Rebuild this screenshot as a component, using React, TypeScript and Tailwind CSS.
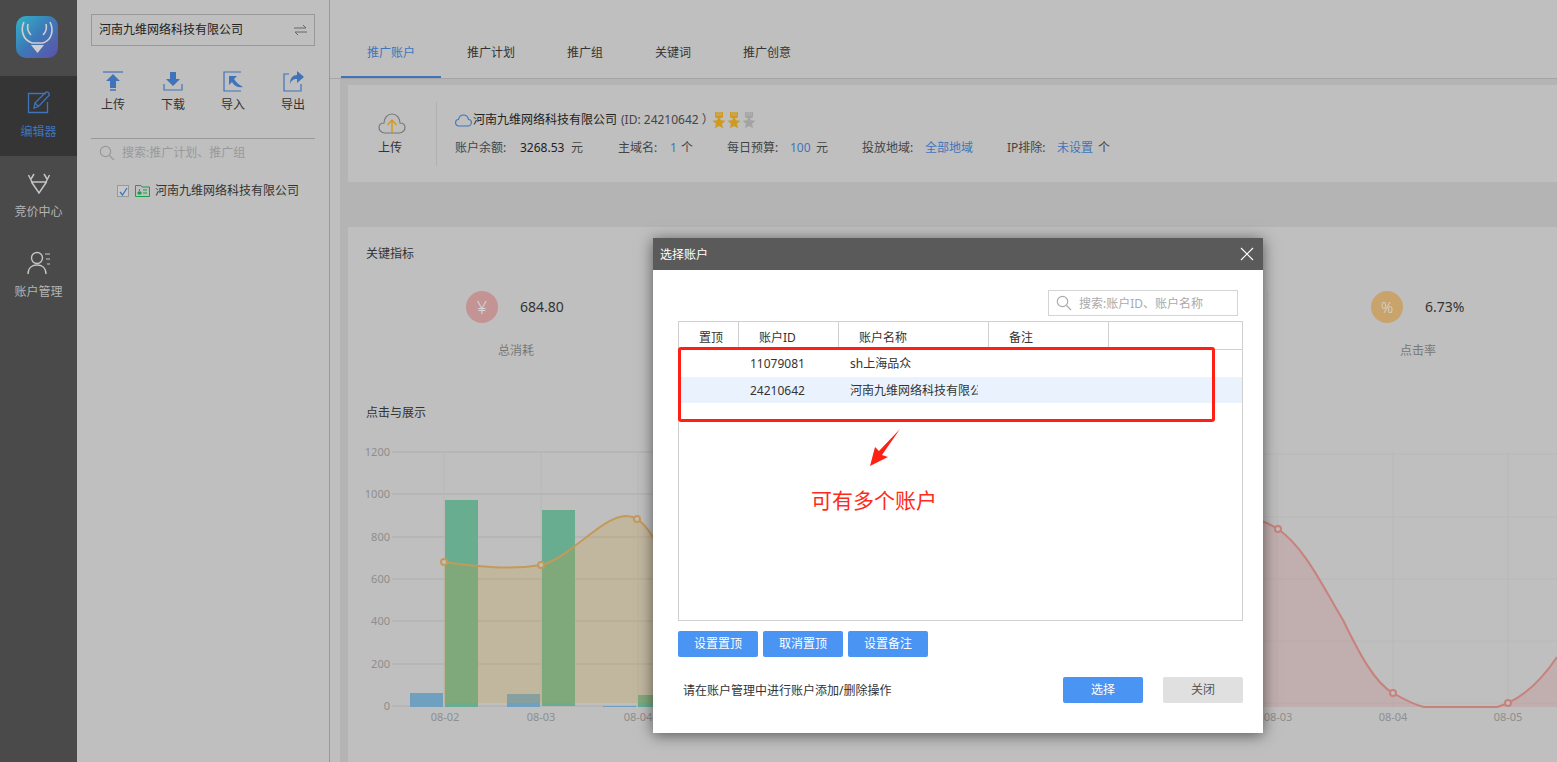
import React from 'react';

const navItems = [
  { label: '编辑器', active: true },
  { label: '竞价中心', active: false },
  { label: '账户管理', active: false },
];

const NavIcon = ({ index }: { index: number }) => {
  if (index === 0) {
    return (
      <svg width="26" height="24" viewBox="0 0 26 24" fill="none" stroke="#3f74bb" strokeWidth="1.3">
        <path d="M20 2.500H2.500v19h19V11" />
        <path d="M8 17l1-5L19.500 1.500c1-1 2-.8 3 .2s1.200 2 .2 3L12.500 15.500z" />
        <path d="M9 12l3.500 3.500" />
      </svg>
    );
  }
  if (index === 1) {
    return (
      <svg width="24" height="22" viewBox="0 0 24 22" fill="none" stroke="#c4c4c4" strokeWidth="1.5">
        <path d="M1.500 3L5 10M22.500 3L19 10" />
        <path d="M7 2L4 7M17 2l3 5" />
        <path d="M4 10h16M4.500 10L12 21l7.500-11" />
      </svg>
    );
  }
  return (
    <svg width="24" height="24" viewBox="0 0 24 24" fill="none" stroke="#c4c4c4" strokeWidth="1.4">
      <circle cx="10" cy="7" r="5.500" />
      <path d="M1 23c0-6 4-9 9-9s9 3 9 9" />
      <path d="M18 3h5M19 8h4M20 13h3" strokeWidth="1" />
    </svg>
  );
};

const ActionIcon = ({ index }: { index: number }) => {
  const shapes = [
    <g key="up">
      <path d="M0 1h20" stroke="#3f74bb" strokeWidth="1.2" />
      <path d="M10 3l7 7h-4v7H7v-7H3z" fill="#3f74bb" />
      <path d="M7 19h6" stroke="#3f74bb" strokeWidth="1.5" />
    </g>,
    <g key="down" fill="none">
      <path d="M1 13v6h18v-6" stroke="#3f74bb" strokeWidth="1.2" />
      <path d="M7 1h6v7h4l-7 7-7-7h4z" fill="#3f74bb" />
    </g>,
    <g key="in" fill="none">
      <path d="M18 1H1v19h17" stroke="#3f74bb" strokeWidth="1.2" />
      <path d="M6 5h8l-3 3c2 3 5 6 9 8-5 1-9-1-11-5l-3 3z" fill="#3f74bb" />
    </g>,
    <g key="out" fill="none">
      <path d="M6 3H1v17h17v-7" stroke="#3f74bb" strokeWidth="1.2" />
      <path d="M14 0l7 6-7 6V8c-4 0-6 2-7 5 0-6 3-9 7-9z" fill="#3f74bb" />
    </g>,
  ];
  return (
    <svg width="21" height="21" viewBox="0 0 21 21">
      {shapes[index]}
    </svg>
  );
};

const actions = ['上传', '下载', '导入', '导出'];

const Star = ({ color }: { color: string }) => (
  <svg width="14" height="17" viewBox="0 0 14 17">
    <path d="M3 0h8v5l-1 1H4L3 5z" fill={color} />
    <path d="M5 0v4M7 0v4M9 0v4" stroke="#c0c0c0" strokeWidth="0.6" />
    <path d="M7 4l1.900 4.300 4.600.4-3.500 3 1.100 4.600L7 13.900l-4.100 2.400L4 11.700.5 8.700l4.600-.4z" fill={color} />
  </svg>
);

const SearchIcon = ({ color }: { color: string }) => (
  <svg width="16" height="16" viewBox="0 0 16 16" fill="none" stroke={color} strokeWidth="1.2">
    <circle cx="6.500" cy="6.500" r="5.200" />
    <path d="M10.500 10.500l4.500 4.500" />
  </svg>
);

const Charts = () => {
  const leftGrid = [452, 494, 537, 579, 621, 664, 706];
  const leftLabels = ['1200', '1000', '800', '600', '400', '200', '0'];
  return (
    <svg className="block" width="1209" height="322" viewBox="348 440 1209 322">
      {leftGrid.map((y) => (
        <path key={y} d={`M392 ${y}H660`} stroke="#b6b6b6" strokeWidth="2" />
      ))}
      {[444, 541, 638].map((x) => (
        <path key={x} d={`M${x} 452V707`} stroke="#b8b8b8" />
      ))}
      {leftLabels.map((t, i) => (
        <text key={t} x="390" y={leftGrid[i] + 4} textAnchor="end" fontSize="11" fill="#8e8e8e">
          {t}
        </text>
      ))}
      {[
        ['08-02', 445],
        ['08-03', 541],
        ['08-04', 638],
      ].map(([t, x]) => (
        <text key={t} x={x} y="721" textAnchor="middle" fontSize="11" fill="#8e8e8e">
          {t}
        </text>
      ))}
      <rect x="410" y="693" width="33" height="14" fill="#6fa0bf" />
      <rect x="445" y="500" width="33" height="207" fill="#68ad8f" />
      <rect x="507" y="694" width="33" height="13" fill="#6fa0bf" />
      <rect x="542" y="510" width="33" height="196" fill="#68ad8f" />
      <rect x="603" y="706" width="33" height="1" fill="#6fa0bf" />
      <rect x="638" y="695" width="33" height="12" fill="#68ad8f" />
      <path
        d="M444 562C480 567 510 570 541 565C570 558 600 518 625 516C632 516 637 519 637 519C648 526 655 540 665 560V703H444Z"
        fill="#c8a040"
        fillOpacity="0.25"
      />
      <path
        d="M444 562C480 567 510 570 541 565C570 558 600 518 625 516C632 516 637 519 637 519C648 526 655 540 665 560"
        fill="none"
        stroke="#c49a5a"
        strokeWidth="2"
      />
      {[
        [444, 562],
        [541, 565],
        [637, 519],
      ].map(([x, y]) => (
        <circle key={x} cx={x} cy={y} r="3" fill="#c0c0c0" stroke="#c49a5a" strokeWidth="2" />
      ))}

      {[454, 517, 579, 641, 703].map((y) => (
        <path key={y} d={`M1250 ${y}H1557`} stroke="#b8b8b8" />
      ))}
      {[1277, 1393, 1508].map((x) => (
        <path key={x} d={`M${x} 452V707`} stroke="#b8b8b8" />
      ))}
      {[
        ['08-03', 1278],
        ['08-04', 1393],
        ['08-05', 1508],
      ].map(([t, x]) => (
        <text key={t} x={x} y="721" textAnchor="middle" fontSize="11" fill="#8e8e8e">
          {t}
        </text>
      ))}
      <path
        d="M1250 518C1262 520 1270 524 1278 529C1305 548 1322 585 1343 620C1360 655 1375 683 1393 693C1405 700 1415 705 1424 707H1497C1500 706 1504 705 1508 703C1525 695 1543 678 1557 657V707H1250Z"
        fill="#c4807a"
        fillOpacity="0.25"
      />
      <path
        d="M1250 518C1262 520 1270 524 1278 529C1305 548 1322 585 1343 620C1360 655 1375 683 1393 693C1405 700 1415 705 1424 707H1497C1500 706 1504 705 1508 703C1525 695 1543 678 1557 657"
        fill="none"
        stroke="#c9817b"
        strokeWidth="2"
      />
      {[
        [1278, 529],
        [1393, 693],
        [1508, 703],
      ].map(([x, y]) => (
        <circle key={x} cx={x} cy={y} r="3" fill="#c0c0c0" stroke="#c9817b" strokeWidth="2" />
      ))}
    </svg>
  );
};

const AccountDialog = () => (
  <div className="absolute left-[653px] top-[238px] w-[610px] h-[495px] bg-white shadow-[0_2px_14px_rgba(0,0,0,0.55)] flex flex-col">
    {/* title bar */}
    <div className="h-[32px] bg-[#5a5a5a] flex items-center justify-between pl-[7px] pr-[9px] text-white">
      <span className="pt-[2px]">选择账户</span>
      <svg width="14" height="14" viewBox="0 0 14 14" stroke="#fff" strokeWidth="1.100">
        <path d="M1 1l12 12M13 1L1 13" />
      </svg>
    </div>

    <div className="flex justify-end mt-[20px] mr-[25px]">
      <div className="w-[190px] h-[26px] border border-[#d4d4d4] flex items-center pl-[7px] gap-[7px] text-[#aaa]">
        <SearchIcon color="#aaa" />
        <span className="pt-[2px]">搜索:账户ID、账户名称</span>
      </div>
    </div>

    {/* account table */}
    <div className="mt-[5px] ml-[25px] w-[565px] h-[300px] border border-[#d0d0d0] text-[#333]">
      <div className="flex h-[28px] border-b border-[#d0d0d0] text-[#333]">
        <div className="w-[60px] border-r border-[#d0d0d0] pl-[20px] pt-[8px]">置顶</div>
        <div className="w-[100px] border-r border-[#d0d0d0] pl-[20px] pt-[8px]">账户ID</div>
        <div className="w-[150px] border-r border-[#d0d0d0] pl-[20px] pt-[8px]">账户名称</div>
        <div className="w-[120px] border-r border-[#d0d0d0] pl-[20px] pt-[8px]">备注</div>
      </div>
      <div className="flex items-center h-[27px] pl-[71px]">
        <span className="w-[100px]">11079081</span>
        <span>sh上海品众</span>
      </div>
      <div className="flex items-center h-[26px] pl-[71px] bg-[#eaf3fd]">
        <span className="w-[100px] pt-[2px]">24210642</span>
        <span className="w-[128px] pt-[2px] overflow-hidden whitespace-nowrap">河南九维网络科技有限公司</span>
      </div>
    </div>

    <div className="flex gap-[5px] mt-[10px] ml-[25px] text-white">
      <button className="w-[80px] h-[26px] bg-[#4a94f4] rounded-[2px]">设置置顶</button>
      <button className="w-[80px] h-[26px] bg-[#4a94f4] rounded-[2px]">取消置顶</button>
      <button className="w-[80px] h-[26px] bg-[#4a94f4] rounded-[2px]">设置备注</button>
    </div>

    <div className="flex items-center mt-[20px] ml-[30px] mr-[20px]">
      <span className="flex-1 pt-[2px] text-[#333]">请在账户管理中进行账户添加/删除操作</span>
      <button className="w-[80px] h-[26px] bg-[#4a94f4] rounded-[2px] text-white">选择</button>
      <button className="w-[80px] h-[26px] ml-[20px] bg-[#e0e0e0] rounded-[2px] text-[#555]">关闭</button>
    </div>

    {/* red annotation drawn over the dialog */}
    <div className="absolute left-[25px] top-[109px] w-[537px] h-[75px] border-[3px] border-[#ff2015] rounded-[3px]" />
    <svg className="absolute left-[215px] top-[190px]" width="34" height="40" viewBox="0 0 34 40">
      <path d="M32 1L14 27l6 2L2 38l5-19 4 4z" fill="#ff2015" />
    </svg>
    <span className="absolute left-[158px] top-[248px] text-[21px] leading-[28px] text-[#ff2a1a]">可有多个账户</span>
  </div>
);

export default function App() {
  return (
    <div className="relative flex w-full h-screen overflow-hidden bg-[#bfbfbf] text-[12px] leading-[16px] text-[#333] [font-family:'Noto_Sans','Noto_Sans_CJK_SC',sans-serif]">
      {/* left navigation */}
      <div className="w-[77px] shrink-0 bg-[#4a4a4a]">
        <div className="h-[76px] flex items-start pt-[16px] pl-[16px]">
          <div className="w-[42px] h-[42px] rounded-[10px] bg-gradient-to-br from-[#2fb3c4] via-[#3c78b8] to-[#5a4fa8]">
            <svg width="42" height="42" viewBox="0 0 42 42" fill="none" stroke="#cfcfcf" strokeWidth="1.600">
              <path d="M8 6C4 14 7 24 16 27H27C36 24 38 14 34 6" />
              <path d="M12 8C11 12 12 16 15 19M30 8C31 12 30 16 27 19" />
              <path d="M15 29h13l-6.500 8z" fill="#cfcfcf" stroke="none" />
            </svg>
          </div>
        </div>
        {navItems.map((item, i) => (
          <div
            key={item.label}
            className={`h-[80px] flex flex-col items-center pt-[15px] gap-[9px] ${
              item.active ? 'bg-[#353535] text-[#3f74bb]' : 'text-[#b4b4b4]'
            }`}
          >
            <div className="h-[24px] flex items-center"><NavIcon index={i} /></div>
            <span>{item.label}</span>
          </div>
        ))}
      </div>

      {/* tree panel */}
      <div className="w-[253px] shrink-0 border-r border-[#999] px-[14px] pt-[14px]">
        <div className="w-[224px] h-[32px] border border-[#999] flex items-center justify-between pl-[7px] pr-[7px] text-[#222]">
          <span>河南九维网络科技有限公司</span>
          <svg width="13" height="10" viewBox="0 0 13 10" fill="none" stroke="#666">
            <path d="M0 3h12L9 0M13 7H1l3 3" />
          </svg>
        </div>
        <div className="w-[224px] mt-[25px] pb-[25px] border-b border-[#999]">
          <div className="flex -ml-[8px]">
            {actions.map((label, i) => (
              <div key={label} className="w-[60px] shrink-0 flex flex-col items-center gap-[5px] text-[#333]">
                <ActionIcon index={i} />
                <span>{label}</span>
              </div>
            ))}
          </div>
        </div>
        <div className="flex items-center mt-[6px] ml-[8px] gap-[7px] text-[#999]">
          <SearchIcon color="#999" />
          <span>搜索:推广计划、推广组</span>
        </div>
        <div className="flex items-center mt-[22px] ml-[26px] text-[#333]">
          <span className="w-[12px] h-[12px] border border-[#999] bg-[#c8c8c8] flex items-center justify-center">
            <svg width="9" height="9" viewBox="0 0 9 9" fill="none" stroke="#3f74bb" strokeWidth="1.300">
              <path d="M1 5l2.500 3L8 1" />
            </svg>
          </span>
          <svg className="ml-[6px]" width="15" height="12" viewBox="0 0 15 12" fill="none" stroke="#1a9e4a">
            <path d="M.5 11.500V.5H6l1 1.500h7.500v9.500z" />
            <path d="M3 7h3v2H3zM4.500 4v2M8 5h4M8 8h4" fill="#1a9e4a" />
          </svg>
          <span className="ml-[5px]">河南九维网络科技有限公司</span>
        </div>
      </div>

      {/* main content */}
      <div className="flex-1 min-w-0 flex flex-col">
        <div className="h-[79px] shrink-0 border-b border-[#a5a5a5] flex items-end pl-[11px]">
          <div className="h-[48px] px-[26px] pt-[15px] border-b-2 border-[#3f74bb] text-[#3f74bb]">推广账户</div>
          <div className="h-[48px] px-[26px] pt-[15px]">推广计划</div>
          <div className="h-[48px] px-[26px] pt-[15px]">推广组</div>
          <div className="h-[48px] px-[26px] pt-[15px]">关键词</div>
          <div className="h-[48px] px-[26px] pt-[15px]">推广创意</div>
        </div>

        <div className="flex-1 ml-[10px] pl-[8px] pt-[6px] bg-[#b4b4b4]">
          {/* account summary */}
          <div className="h-[97px] bg-[#bfbfbf] flex items-center">
            <div className="w-[89px] h-[64px] border-r border-[#b0b0b0] flex flex-col items-center justify-center gap-[4px]">
              <svg width="28" height="24" viewBox="0 0 28 24" fill="none">
                <path d="M7 21C3 21 1 18 1 15.500S3 11 6 11C6 6 9.500 2 14 2s8 4 8 9c3 0 5 2 5 4.500S25 21 21 21z" stroke="#777" strokeWidth="1.200" />
                <path d="M14 21V8M9.500 13L14 8l4.500 5" stroke="#d49a1e" strokeWidth="1.500" />
              </svg>
              <span className="pr-[4px]">上传</span>
            </div>
            <div className="pl-[18px] flex flex-col gap-[11px]">
              <div className="flex items-center">
                <svg width="17" height="13" viewBox="0 0 17 13" fill="none" stroke="#3f74bb" strokeWidth="1.100">
                  <path d="M4 12C2 12 .6 10.500.6 8.500S2 5.500 3.500 5.500C4 3 6 1 8.500 1s4.500 2 5 4.500c1.500 0 2.900 1.200 2.900 3S15 12 13 12z" />
                </svg>
                <span className="ml-[1px] text-[#222]">河南九维网络科技有限公司</span>
                <span className="ml-[4px] text-[#444]">(ID:&nbsp;24210642&nbsp;）</span>
                <span className="-ml-[2px] flex gap-[1px]">
                  <Star color="#cf9a1e" />
                  <Star color="#cf9a1e" />
                  <Star color="#a3a3a3" />
                </span>
              </div>
              <div className="flex items-center whitespace-nowrap text-[#444]">
                <span className="w-[65px]">账户余额:</span>
                <span className="w-[51px] text-[#222]">3268.53</span>
                <span className="w-[47px]">元</span>
                <span className="w-[52px]">主域名:</span>
                <span className="w-[11px] text-[#3f74bb]">1</span>
                <span className="w-[46px]">个</span>
                <span className="w-[63px]">每日预算:</span>
                <span className="w-[26px] text-[#3f74bb]">100</span>
                <span className="w-[46px]">元</span>
                <span className="w-[63px]">投放地域:</span>
                <span className="w-[82px] text-[#3f74bb]">全部地域</span>
                <span className="w-[50px]">IP排除:</span>
                <span className="w-[41px] text-[#3f74bb]">未设置</span>
                <span>个</span>
              </div>
            </div>
          </div>

          {/* key metrics and charts */}
          <div className="mt-[45px] h-[535px] bg-[#bfbfbf]">
            <div className="pl-[18px] pt-[19px]">关键指标</div>
            <div className="grid grid-cols-[repeat(4,300.330px)] pl-[18px] mt-[29px] h-[64px]">
              <div className="pl-[100px]">
                <div className="flex items-center h-[32px]">
                  <span className="w-[32px] h-[32px] rounded-full bg-[#c49393] flex items-center justify-center text-[#d8d8d8] text-[18px] font-light">¥</span>
                  <span className="ml-[22px] text-[14px] text-[#333]">684.80</span>
                </div>
                <div className="mt-[20px] ml-[32px] text-[#777]">总消耗</div>
              </div>
              <div />
              <div />
              <div className="pl-[103px] border-l border-[#b8b8b8]">
                <div className="flex items-center h-[32px]">
                  <span className="w-[32px] h-[32px] rounded-full bg-[#c8a36c] flex items-center justify-center text-[#d8d8d8] text-[15px] font-light">%</span>
                  <span className="ml-[22px] text-[14px] text-[#333]">6.73%</span>
                </div>
                <div className="mt-[20px] ml-[29px] text-[#777]">点击率</div>
              </div>
            </div>
            <div className="pl-[18px] mt-[50px] h-[20px]">点击与展示</div>
            <div className="mt-[15px]">
              <Charts />
            </div>
          </div>
        </div>
      </div>

      <AccountDialog />
    </div>
  );
}
